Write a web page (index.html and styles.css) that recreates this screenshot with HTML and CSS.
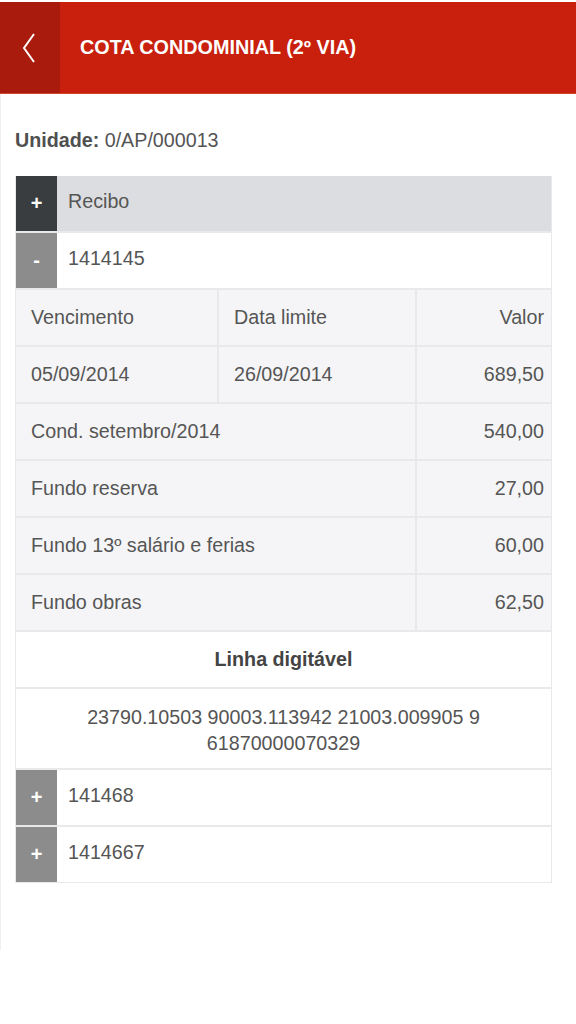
FILE: index.html
```html
<!DOCTYPE html>
<html lang="pt">
<head>
<meta charset="utf-8">
<title>Cota condominial</title>
<link rel="stylesheet" href="styles.css">
</head>
<body>
<header class="topbar">
  <a class="back" href="#" aria-label="Voltar">
    <svg width="16" height="32" viewBox="0 0 16 32"><path d="M13 2 L3 16 L13 30" fill="none" stroke="#fff" stroke-width="2"/></svg>
  </a>
  <h1 class="title">COTA CONDOMINIAL (2º VIA)</h1>
</header>
<main class="page">
  <p class="unit"><b>Unidade:</b> 0/AP/000013</p>
  <div class="list">
    <div class="acc acc-head">
      <span class="tog tog-dark">+</span>
      <span class="acc-label">Recibo</span>
    </div>
    <div class="acc">
      <span class="tog">-</span>
      <span class="acc-label">1414145</span>
    </div>
    <div class="grid">
      <div class="cell">Vencimento</div>
      <div class="cell">Data limite</div>
      <div class="cell num">Valor</div>
      <div class="cell">05/09/2014</div>
      <div class="cell">26/09/2014</div>
      <div class="cell num">689,50</div>
      <div class="cell span2">Cond. setembro/2014</div>
      <div class="cell num">540,00</div>
      <div class="cell span2">Fundo reserva</div>
      <div class="cell num">27,00</div>
      <div class="cell span2">Fundo 13º salário e ferias</div>
      <div class="cell num">60,00</div>
      <div class="cell span2">Fundo obras</div>
      <div class="cell num">62,50</div>
    </div>
    <div class="line-title">Linha digitável</div>
    <div class="line-code">23790.10503 90003.113942 21003.009905 9<br>61870000070329</div>
    <div class="acc">
      <span class="tog">+</span>
      <span class="acc-label">141468</span>
    </div>
    <div class="acc">
      <span class="tog">+</span>
      <span class="acc-label">1414667</span>
    </div>
  </div>
</main>
</body>
</html>
```

FILE: styles.css
```css
* { box-sizing: border-box; }
html, body { margin: 0; padding: 0; background: #fff; }
body {
  font-family: "Liberation Sans", Arial, sans-serif;
  font-size: 20px;
  color: #555;
}
.topbar {
  margin-top: 2px;
  height: 92px;
  background: #c8200d;
  display: flex;
  align-items: center;
  border-bottom: 1px solid #d4452f;
}
.back {
  width: 60px;
  height: 100%;
  background: #a91b0c;
  display: flex;
  align-items: center;
  justify-content: center;
  padding-right: 2px;
}
.back svg { display: block; }
.title {
  margin: 0 0 0 20px;
  color: #fff;
  font-size: 19.8px;
  font-weight: bold;
  letter-spacing: 0;
}
.page {
  border-left: 1px solid #f0f0f0;
  height: 856px;
  padding: 30px 0 0 14px;
}
.unit {
  margin: 0 0 20px 0;
  font-size: 19.7px;
  line-height: 32px;
}
.unit b { color: #4f4f4f; }
.list {
  width: 537px;
  background: #e9e9e9;
  display: flex;
  flex-direction: column;
  gap: 2px;
  padding: 0 1px 1px 1px;
}
.acc {
  height: 55px;
  display: flex;
  align-items: stretch;
  background: #fff;
}
.acc-head { background: #dcdde1; }
.tog {
  width: 41px;
  flex: none;
  background: #8c8c8c;
  color: #fff;
  font-weight: bold;
  font-size: 20px;
  display: flex;
  align-items: center;
  justify-content: center;
}
.tog-dark { background: #3a3d40; }
.acc-label {
  display: flex;
  align-items: center;
  padding: 0 0 4px 11px;
  font-size: 19.7px;
}
.grid {
  display: grid;
  grid-template-columns: 201px 196px 1fr;
  gap: 2px;
}
.cell {
  height: 55px;
  background: #f5f5f7;
  display: flex;
  align-items: center;
  padding: 0 15px;
  font-size: 19.7px;
}
.cell.num { justify-content: flex-end; padding-right: 7px; }
.cell.span2 { grid-column: span 2; }
.line-title {
  height: 55px;
  background: #fff;
  display: flex;
  align-items: center;
  justify-content: center;
  font-weight: bold;
  color: #444;
  font-size: 19.7px;
}
.line-code {
  height: 79px;
  background: #fff;
  text-align: center;
  line-height: 26px;
  padding-top: 15px;
  font-size: 19.7px;
}
```
